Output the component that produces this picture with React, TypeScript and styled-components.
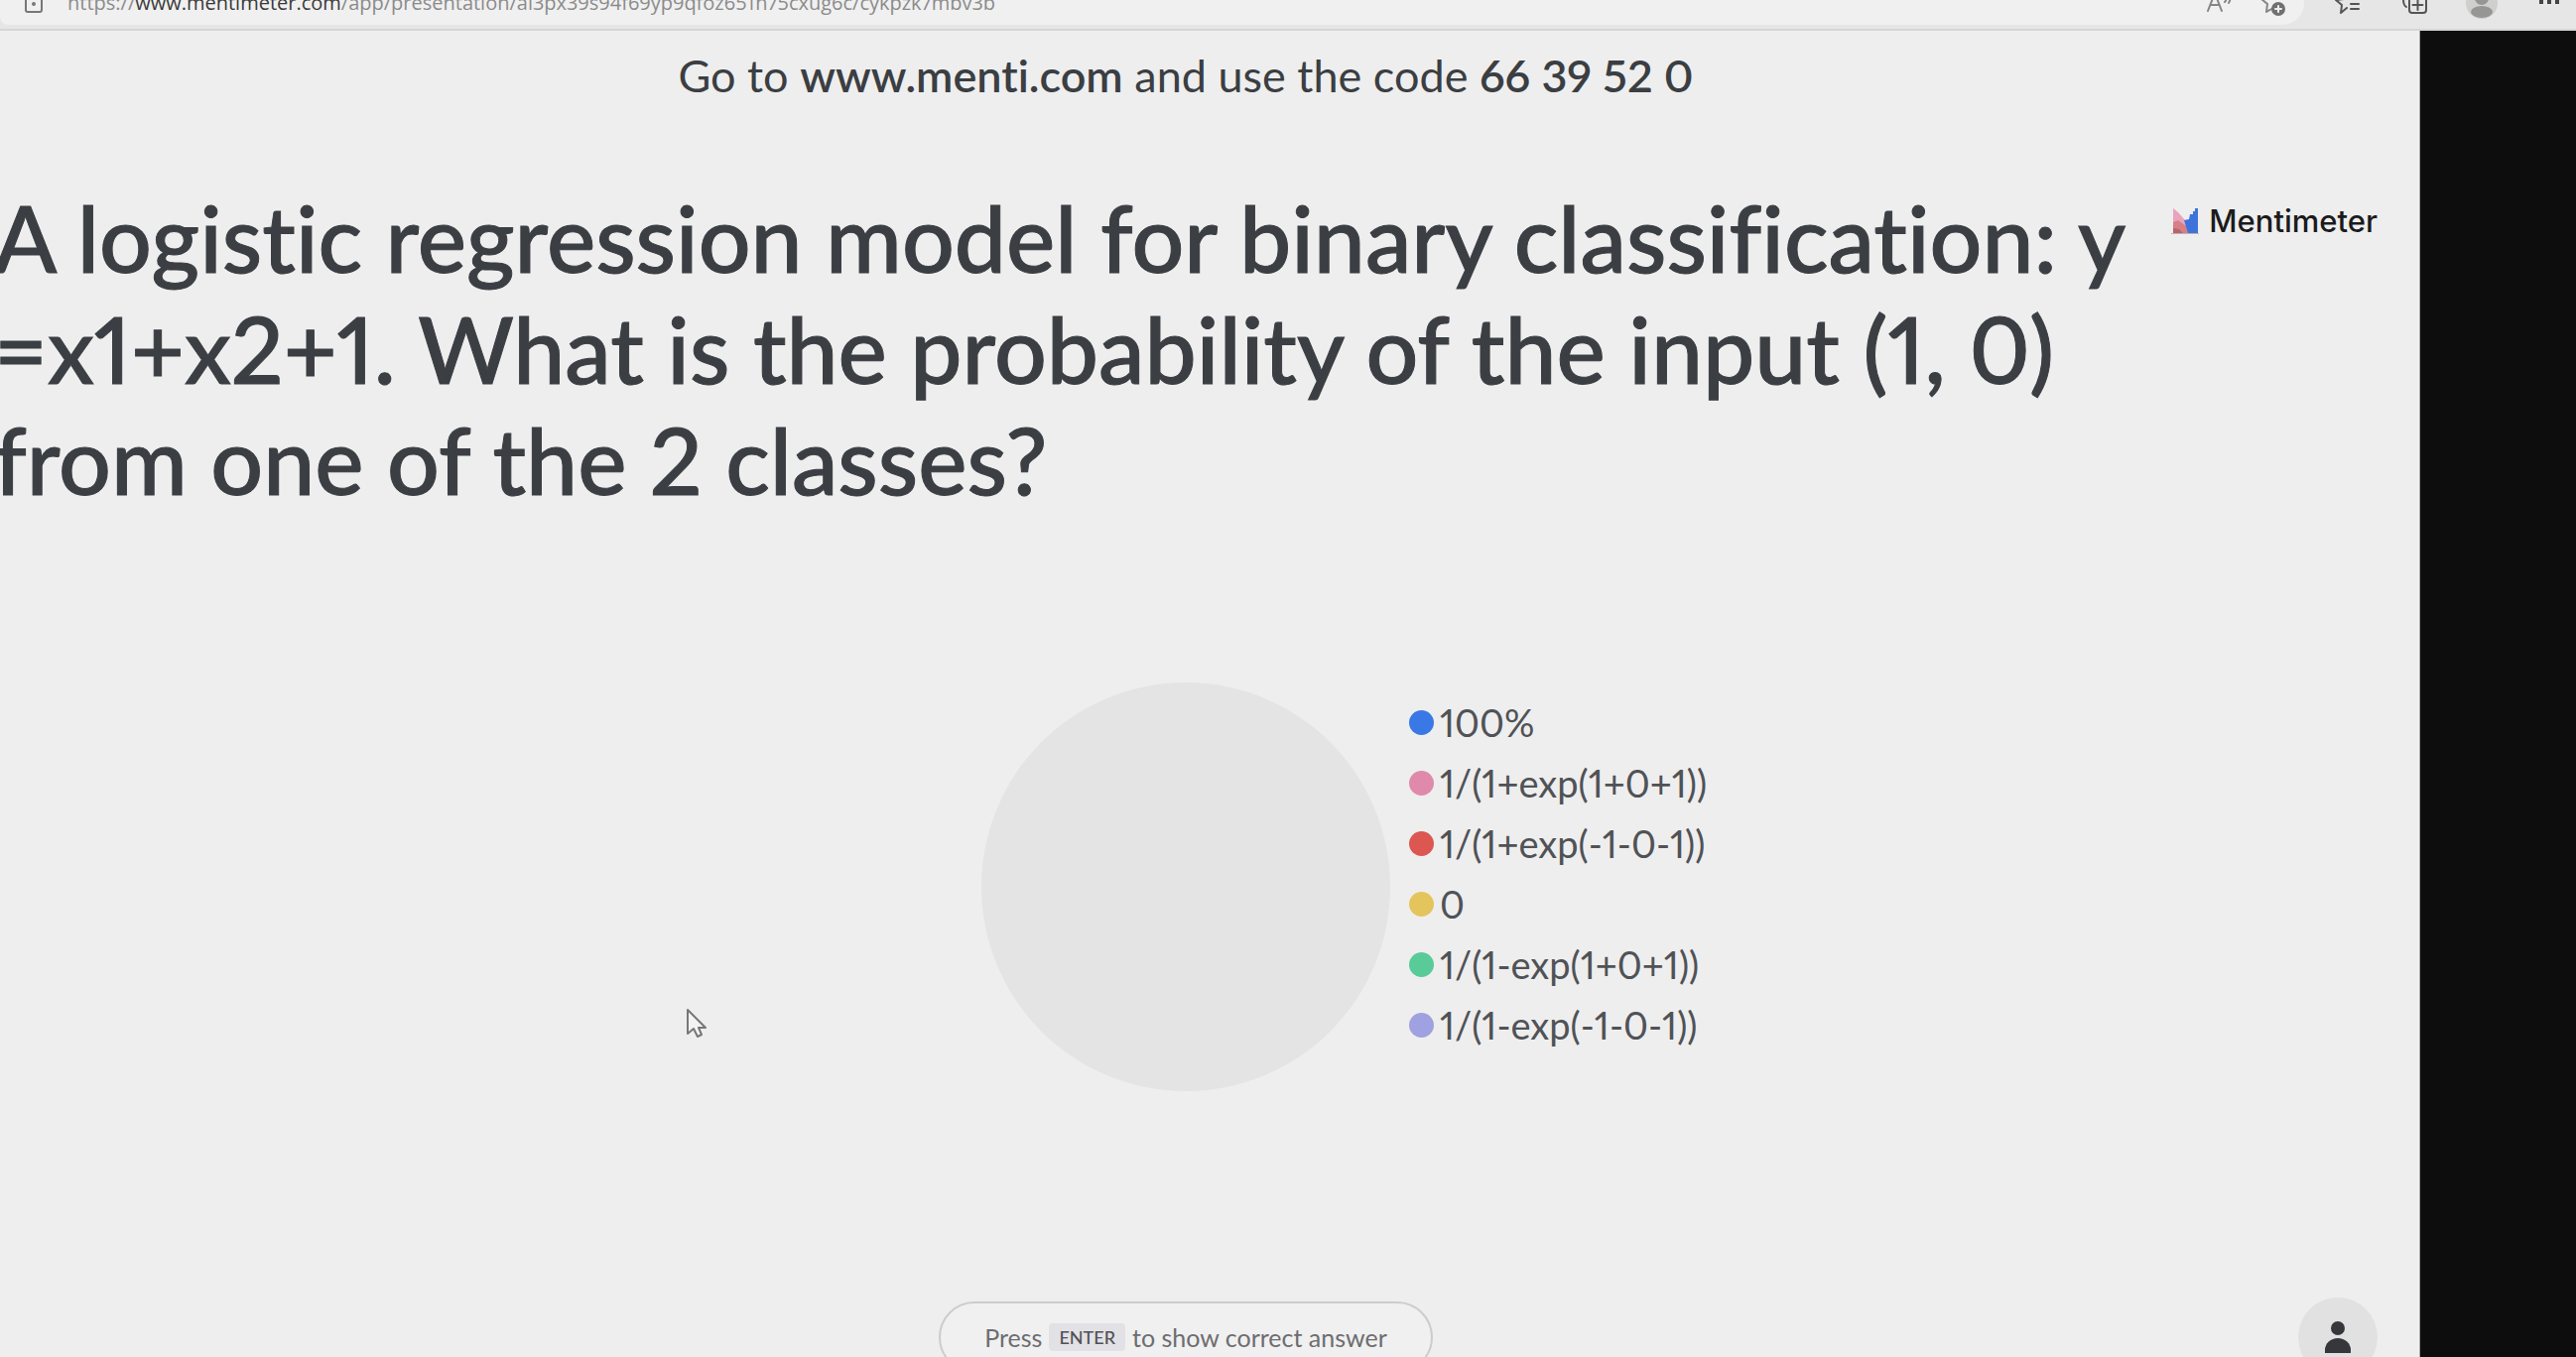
import React from 'react';
import styled, { createGlobalStyle } from 'styled-components';

const GlobalStyle = createGlobalStyle`
  *, *::before, *::after { box-sizing: border-box; }
  body { margin: 0; overflow: hidden; background: #ededed; }
  button { font: inherit; color: inherit; border: 0; padding: 0; background: none; }
  a { color: inherit; text-decoration: none; }
`;

const Page = styled.div`
  height: 100vh;
  overflow: hidden;
  display: flex;
  flex-direction: column;
  font-family: Lato, 'Open Sans', sans-serif;
  font-variant-ligatures: none;
  font-variant-numeric: proportional-nums;
  color: #3b3e42;
`;

/* Browser toolbar, scrolled partly out of view */
const Toolbar = styled.header`
  flex: none;
  display: flex;
  height: 51px;
  margin-top: -20px;
  padding-bottom: 4px;
  background: #e6e6e6;
  border-bottom: 2px solid #d6d6d6;
`;

const AddressBar = styled.div`
  flex: 1;
  display: flex;
  align-items: center;
  gap: 22px;
  padding: 0 16px 0 22px;
  background: #f0f0f0;
  border-radius: 0 0 22px 8px;
`;

const Address = styled.a`
  flex: 1;
  font-family: 'Open Sans', sans-serif;
  font-size: 20px;
  line-height: 20px;
  color: #8b8b8b;
`;

const Domain = styled.span`
  color: #3a3a3a;
`;

const Tools = styled.nav`
  display: flex;
  align-items: center;
  gap: 36px;
  padding: 0 11px 0 27px;
`;

const ToolButton = styled.button`
  display: flex;
  width: 32px;
  height: 32px;
`;

const Icon = styled.svg<{ $size?: number; $stroke?: string }>`
  display: block;
  flex: none;
  width: ${p => p.$size ?? 32}px;
  height: ${p => p.$size ?? 32}px;
  fill: none;
  stroke: ${p => p.$stroke ?? '#555'};
  stroke-width: 2;
  stroke-linecap: round;
  stroke-linejoin: round;
`;

const Stage = styled.div`
  flex: 1;
  min-height: 0;
  display: flex;
`;

const Slide = styled.main`
  position: relative;
  flex: 1;
  min-width: 0;
  padding-top: 17px;
  background: #eeeeee;
  border-right: 1px solid #a8a8a8;
`;

const DarkStrip = styled.aside`
  flex: none;
  width: 157px;
  background: #0d0d0d;
`;

/* The slide starts a little outside the window on the left */
const Section = styled.section<{ $top?: number }>`
  margin: ${p => p.$top ?? 0}px 0 0 -48px;
  padding: 0 42px;
`;

const JoinLine = styled.p`
  margin: 0;
  text-align: center;
  font-size: 45px;
  line-height: 56px;

  strong { font-weight: 600; }
`;

const QuestionRow = styled(Section)`
  display: flex;
  justify-content: space-between;
`;

const Question = styled.h1`
  margin: 0;
  font-size: 93px;
  line-height: 112px;
  font-weight: 500;
  white-space: nowrap;
  -webkit-text-stroke: 1px currentColor;
`;

const Brand = styled.a`
  display: flex;
  align-items: center;
  gap: 10px;
  height: 80px;
  font-family: Inter, sans-serif;
  font-size: 31px;
  line-height: 40px;
  font-weight: 500;
  color: #1b1b1c;
`;

const ChartRow = styled(Section)`
  display: grid;
  grid-template-columns: 1fr auto 1fr;
  align-items: center;
  column-gap: 19px;
`;

const Pie = styled.div`
  grid-column: 2;
  width: 412px;
  height: 412px;
  border-radius: 50%;
  background: #e4e4e4;
`;

const Legend = styled.ul`
  margin: 0;
  padding: 0 0 26px;
  list-style: none;
`;

const LegendItem = styled.li`
  display: flex;
  align-items: center;
  gap: 6px;
  font-size: 38px;
  line-height: 61px;
  color: #505256;
  white-space: nowrap;
`;

const Dot = styled.span<{ $color: string }>`
  width: 25px;
  height: 25px;
  border-radius: 50%;
  background: ${p => p.$color};
`;

const Controls = styled(Section)`
  display: grid;
  grid-template-columns: 1fr auto 1fr;
  align-items: center;
`;

const AnswerButton = styled.button`
  && {
    grid-column: 2;
    display: flex;
    align-items: center;
    gap: 7px;
    height: 72px;
    padding: 0 44px;
    border: 2px solid #cccccc;
    border-radius: 36px;
    background: #f0f0f0;
    color: #6d6d70;
    font-size: 25px;
    line-height: 32px;
  }
`;

const Key = styled.kbd`
  padding: 0 10px;
  border-radius: 4px;
  background: #e2e2e6;
  color: #515156;
  font-family: inherit;
  font-size: 18px;
  line-height: 28px;
  font-weight: 500;
`;

const PeopleButton = styled.button`
  && {
    justify-self: end;
    display: grid;
    place-items: center;
    width: 80px;
    height: 80px;
    border-radius: 50%;
    background: #e1e1e1;
  }
`;

const Pointer = styled.svg`
  position: absolute;
  left: 691px;
  top: 985px;
  width: 22px;
  height: 32px;
`;

const answers = [
  { label: '100%', color: '#3a78e6' },
  { label: '1/(1+exp(1+0+1))', color: '#df8aab' },
  { label: '1/(1+exp(-1-0-1))', color: '#dc5652' },
  { label: '0', color: '#e4c45c' },
  { label: '1/(1-exp(1+0+1))', color: '#58cb98' },
  { label: '1/(1-exp(-1-0-1))', color: '#9fa1e0' },
];

const STAR = 'M20 21l-7 4 1-8-6-5 8-1 3-7 3 7 5 1';

export default function App() {
  return (
    <Page>
      <GlobalStyle />
      <Toolbar>
        <AddressBar>
          <Icon viewBox="0 0 24 24" $size={24} $stroke="#777">
            <path d="M7 7V4a5 5 0 0 1 10 0v3" />
            <rect x="4" y="6" width="16" height="15" rx="2" />
            <circle cx="12" cy="13" r="1" fill="#777" />
          </Icon>
          <Address href="#">
            https://<Domain>www.mentimeter.com</Domain>
            /app/presentation/al3px39s94f69yp9qfoz651h75cxug6c/cykpzk7mbv3b
          </Address>
          <ToolButton aria-label="Read aloud">
            <Icon viewBox="0 0 32 32" $stroke="#858585">
              <path d="M5 24l7-18 7 18M8 18h8M22 8c2 2 2 5 0 7M26 6c2 4 2 7 0 10" />
            </Icon>
          </ToolButton>
          <ToolButton aria-label="Add to favorites">
            <Icon viewBox="0 0 32 32" $stroke="#858585">
              <path d={STAR} transform="translate(-3 0)" />
              <circle cx="22" cy="22" r="6" fill="#707070" stroke="#707070" />
              <path d="M22 19v6M19 22h6" stroke="#eee" />
            </Icon>
          </ToolButton>
        </AddressBar>
        <Tools>
          <ToolButton aria-label="Favorites">
            <Icon viewBox="0 0 32 32">
              <path d="M16 21l-6 5 1-8-6-5 8-1 3-7 3 7M20 17h8M20 22h8" />
            </Icon>
          </ToolButton>
          <ToolButton aria-label="Collections">
            <Icon viewBox="0 0 32 32">
              <rect x="11" y="9" width="17" height="17" rx="3" />
              <path d="M19.500 13v10M14.500 18h10M8 20c-3-2-3-5-3-10a5 5 0 0 1 5-5h12" />
            </Icon>
          </ToolButton>
          <ToolButton aria-label="Profile">
            <Icon viewBox="0 0 32 32" $stroke="none">
              <circle cx="16" cy="16" r="16" fill="#cfcfcb" />
              <circle cx="16" cy="11" r="7" fill="#969694" />
              <ellipse cx="16" cy="25" rx="11" ry="6" fill="#969694" />
            </Icon>
          </ToolButton>
          <ToolButton aria-label="Settings and more">
            <Icon viewBox="0 0 32 32" $stroke="none">
              <path d="M6 13h4v4H6zM14 13h4v4h-4zM22 13h4v4h-4z" fill="#444" />
            </Icon>
          </ToolButton>
        </Tools>
      </Toolbar>

      <Stage>
        <Slide>
          <Section>
            <JoinLine>
              Go to <strong>www.menti.com</strong> and use the code <strong>66 39 52 0</strong>
            </JoinLine>
          </Section>

          <QuestionRow $top={79}>
            <Question>
              A logistic regression model for binary classification: y<br />
              =x1+x2+1. What is the probability of the input (1, 0)<br />
              from one of the 2 classes?
            </Question>
            <Brand href="#">
              <Icon viewBox="0 0 28 28" $size={28} $stroke="none">
                <path d="M2 1l5 4 7 8 3 13H2z" fill="#e9a3bd" />
                <path d="M2 15l5-2 8 6 3 7H2z" fill="#d77f84" />
                <path d="M2 21l6 1 4 4H2z" fill="#b5656a" />
                <path d="M27 1v25H17l-4-13 5-1 1-5h3V4h2V1z" fill="#3d74dc" />
                <path d="M0 26h28v1H0z" fill="#b9b4bb" />
              </Icon>
              Mentimeter
            </Brand>
          </QuestionRow>

          <ChartRow $top={169}>
            <Pie role="img" aria-label="No votes" />
            <Legend>
              {answers.map(a => (
                <LegendItem key={a.label}>
                  <Dot $color={a.color} />
                  {a.label}
                </LegendItem>
              ))}
            </Legend>
          </ChartRow>

          <Controls $top={208}>
            <AnswerButton>
              Press <Key>ENTER</Key> to show correct answer
            </AnswerButton>
            <PeopleButton aria-label="Participants">
              <Icon viewBox="0 0 32 32" $stroke="none">
                <circle cx="16" cy="7" r="7" fill="#35373b" />
                <path d="M3 32v-3a13 12 0 0 1 26 0v3z" fill="#35373b" />
              </Icon>
            </PeopleButton>
          </Controls>

          <Pointer viewBox="0 0 22 32" aria-hidden="true">
            <path
              d="M2 2v24l6-5 4 8 4-2-3-7h7z"
              fill="#f3f3f3"
              stroke="#777"
              strokeWidth="2"
              strokeLinejoin="round"
            />
          </Pointer>
        </Slide>
        <DarkStrip />
      </Stage>
    </Page>
  );
}
